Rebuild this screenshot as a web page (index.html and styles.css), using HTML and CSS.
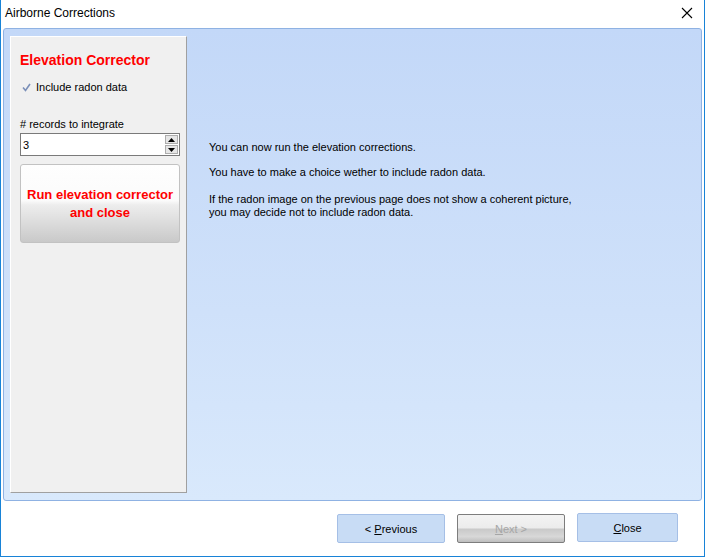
FILE: index.html
```html
<!DOCTYPE html>
<html>
<head>
    <meta charset="UTF-8">
    <title>Airborne Corrections</title>
    <link rel="stylesheet" href="styles.css">
</head>
<body>
    <div class="window">
        <div class="titlebar">
            <span class="title">Airborne Corrections</span>
            <svg class="close-x" width="12" height="12" viewBox="0 0 12 12">
                <path d="M1 1 L11 11 M11 1 L1 11" stroke="#000" stroke-width="1.1" fill="none"/>
            </svg>
        </div>

        <div class="panel">
            <div class="sidebar">
                <div class="side-title">Elevation Corrector</div>

                <label class="check-row">
                    <span class="checkbox">
                        <svg width="9" height="9" viewBox="0 0 9 9">
                            <path d="M1 4.5 L3.5 7.5 L8 1" stroke="#7a8fb8" stroke-width="1.6" fill="none"/>
                        </svg>
                    </span>
                    Include radon data
                </label>

                <div class="field-label"># records to integrate</div>
                <div class="spin">
                    <input type="text" value="3">
                    <div class="spin-buttons">
                        <div class="spin-btn">
                            <svg width="7" height="4" viewBox="0 0 7 4"><path d="M0 4 L3.5 0 L7 4 Z" fill="#000"/></svg>
                        </div>
                        <div class="spin-btn">
                            <svg width="7" height="4" viewBox="0 0 7 4"><path d="M0 0 L3.5 4 L7 0 Z" fill="#000"/></svg>
                        </div>
                    </div>
                </div>

                <button class="run-button">Run elevation corrector<br>and close</button>
            </div>

            <div class="content">
                <p>You can now run the elevation corrections.</p>
                <p>You have to make a choice wether to include radon data.</p>
                <p>If the radon image on the previous page does not show a coherent picture,<br>you may decide not to include radon data.</p>
            </div>
        </div>

        <div class="footer">
            <button class="nav-button"><span>&lt; <u>P</u>revious</span></button>
            <button class="nav-button disabled"><span><u>N</u>ext &gt;</span></button>
            <button class="nav-button close"><span><u>C</u>lose</span></button>
        </div>
    </div>
</body>
</html>
```

FILE: styles.css
```css
body {
    margin: 0;
    font-family: 'Liberation Sans', Arial, sans-serif;
    font-size: 11px;
    color: #000;
    background-color: #fff;
}

.window {
    width: 705px;
    height: 557px;
    box-sizing: border-box;
    border: 1px solid #1883d7;
    border-top: none;
    display: flex;
    flex-direction: column;
    background-color: #fff;
}

.titlebar {
    height: 28px;
    display: flex;
    align-items: center;
    justify-content: space-between;
    padding: 0 11px 0 4px;
    flex-shrink: 0;
}

.title {
    font-size: 12px;
    color: #000;
    margin-top: -2px;
}

.close-x {
    margin-top: -2px;
}

.panel {
    height: 473px;
    margin: 0 2px;
    box-sizing: border-box;
    border: 1px solid #8fb2e3;
    border-radius: 3px;
    background: linear-gradient(to bottom, #c3d8f8 0%, #cfe1fa 60%, #d9e9fc 100%);
    padding: 7px 6px;
    display: flex;
    flex-shrink: 0;
}

.sidebar {
    width: 177px;
    height: 457px;
    box-sizing: border-box;
    background-color: #f0f0f0;
    border-top: 1px solid #fff;
    border-left: 1px solid #fff;
    border-right: 1px solid #a0a0a0;
    border-bottom: 1px solid #a0a0a0;
    padding: 15px 6px 0 9px;
    flex-shrink: 0;
}

.side-title {
    color: #ff0000;
    font-weight: bold;
    font-size: 14px;
    line-height: 16px;
}

.check-row {
    display: flex;
    align-items: center;
    margin-top: 12px;
    height: 14px;
    font-size: 11px;
}

.checkbox {
    width: 9px;
    height: 9px;
    margin: 0 5px 0 2px;
    display: flex;
}

.field-label {
    margin-top: 24px;
    line-height: 13px;
}

.spin {
    margin-top: 2px;
    width: 160px;
    height: 23px;
    box-sizing: border-box;
    border: 1px solid #7a7a7a;
    background-color: #fff;
    display: flex;
}

.spin input {
    flex: 1;
    min-width: 0;
    border: none;
    outline: none;
    padding: 0 2px;
    font-family: 'Liberation Sans', Arial, sans-serif;
    font-size: 11px;
}

.spin-buttons {
    width: 13px;
    display: flex;
    flex-direction: column;
    padding: 1px 1px 1px 0;
    gap: 1px;
}

.spin-btn {
    flex: 1;
    background-color: #e6e6e6;
    border: 1px solid #adadad;
    display: flex;
    align-items: center;
    justify-content: center;
}

.run-button {
    display: block;
    margin-top: 8px;
    width: 160px;
    height: 79px;
    border: 1px solid #c2c2c2;
    border-radius: 3px;
    background: linear-gradient(to bottom, #fefefe 0%, #fbfbfb 46%, #ededed 52%, #c9c9c9 100%);
    color: #ff0000;
    font-family: 'Liberation Sans', Arial, sans-serif;
    font-weight: bold;
    font-size: 13px;
    line-height: 18px;
    padding: 0;
    cursor: pointer;
}

.content {
    padding: 105px 0 0 22px;
}

.content p {
    margin: 0 0 12px 0;
    line-height: 13px;
}

.content p:last-child {
    margin-top: 14px;
}

.footer {
    flex: 1;
    display: flex;
    justify-content: flex-end;
    align-items: flex-start;
    padding: 13px 26px 0 0;
    gap: 12px;
}

.nav-button {
    width: 108px;
    height: 29px;
    box-sizing: border-box;
    border: 1px solid #a5bfe6;
    border-radius: 2px;
    background-color: #c8dcf5;
    font-family: 'Liberation Sans', Arial, sans-serif;
    font-size: 11px;
    color: #000;
    padding: 0;
    cursor: pointer;
}

.nav-button.disabled {
    border-color: #7d7d7d;
    background: linear-gradient(to bottom, #f3f3f3 0%, #ececec 48%, #c9c9c9 52%, #d8d8d8 80%, #bdbdbd 100%);
    color: #a6a6a6;
}

.nav-button.close {
    width: 101px;
    margin-top: -1px;
}
```
